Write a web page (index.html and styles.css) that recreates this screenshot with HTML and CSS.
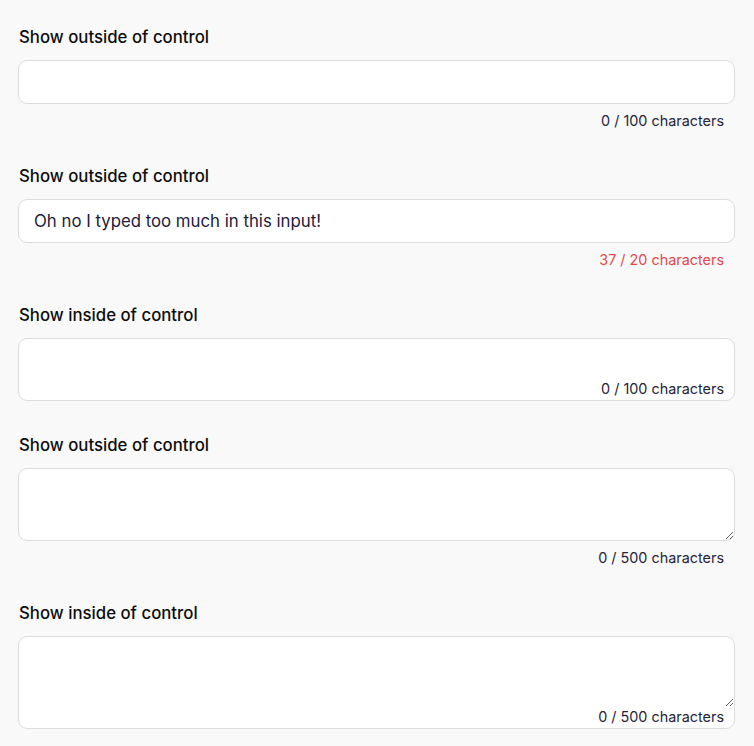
FILE: index.html
```html
<!DOCTYPE html>
<html lang="en">
<head>
<meta charset="utf-8">
<title>Character count</title>
<link rel="stylesheet" href="styles.css">
</head>
<body>
<div class="form">
  <div class="field">
    <label class="label" for="f1">Show outside of control</label>
    <input class="input" id="f1" type="text">
    <div class="count">0 / 100 characters</div>
  </div>
  <div class="field">
    <label class="label" for="f2">Show outside of control</label>
    <input class="input" id="f2" type="text" value="Oh no I typed too much in this input!">
    <div class="count count-error">37 / 20 characters</div>
  </div>
  <div class="field">
    <label class="label" for="f3">Show inside of control</label>
    <div class="box box-input">
      <input class="bare-input" id="f3" type="text">
      <div class="count-inside">0 / 100 characters</div>
    </div>
  </div>
  <div class="field">
    <label class="label" for="f4">Show outside of control</label>
    <textarea class="textarea" id="f4"></textarea>
    <div class="count">0 / 500 characters</div>
  </div>
  <div class="field">
    <label class="label" for="f5">Show inside of control</label>
    <div class="box box-area">
      <textarea class="bare-area" id="f5"></textarea>
      <div class="count-inside">0 / 500 characters</div>
    </div>
  </div>
</div>
</body>
</html>
```
FILE: styles.css
```css
html, body {
  margin: 0;
  background: #f9f9f9;
}
body {
  padding: 24px 19px 0 18px;
  font-family: Inter, "Noto Sans", sans-serif;
  color: #111;
}
.form {
  display: flex;
  flex-direction: column;
  gap: 31px;
}
.field {
  display: flex;
  flex-direction: column;
}
.label {
  font-size: 16.8px;
  line-height: 24px;
  font-weight: 450;
  color: #0d0d0d;
  padding: 1px 0 0 1px;
  margin-bottom: 11px;
}
.input,
.textarea,
.box {
  box-sizing: border-box;
  width: 100%;
  background: #fff;
  border: 1px solid #dcdcdc;
  border-radius: 9px;
  font-family: Inter, "Noto Sans", sans-serif;
  font-size: 16.8px;
  color: #1b1b3a;
  margin: 0;
  outline: none;
}
.input {
  height: 44px;
  padding: 0 15px;
}
.textarea {
  height: 73px;
  padding: 10px 15px;
  resize: vertical;
  display: block;
}
.count {
  box-sizing: border-box;
  height: 28px;
  padding: 7px 11px 0 0;
  font-size: 14.4px;
  line-height: 20px;
  text-align: right;
  color: #24243a;
}
.count-error {
  color: #e5484d;
}
.box {
  display: flex;
  flex-direction: column;
  overflow: hidden;
}
.bare-input,
.bare-area {
  border: 0;
  outline: none;
  background: transparent;
  font-family: Inter, "Noto Sans", sans-serif;
  font-size: 16.8px;
  color: #1b1b3a;
  margin: 0;
  padding: 0 15px;
  box-sizing: border-box;
  width: 100%;
}
.bare-input {
  height: 40px;
}
.bare-area {
  height: 70px;
  padding: 10px 15px;
  resize: vertical;
  display: block;
}
.count-inside {
  font-size: 14.4px;
  line-height: 20px;
  text-align: right;
  padding: 0 10px 1px 0;
  color: #24243a;
}
```
